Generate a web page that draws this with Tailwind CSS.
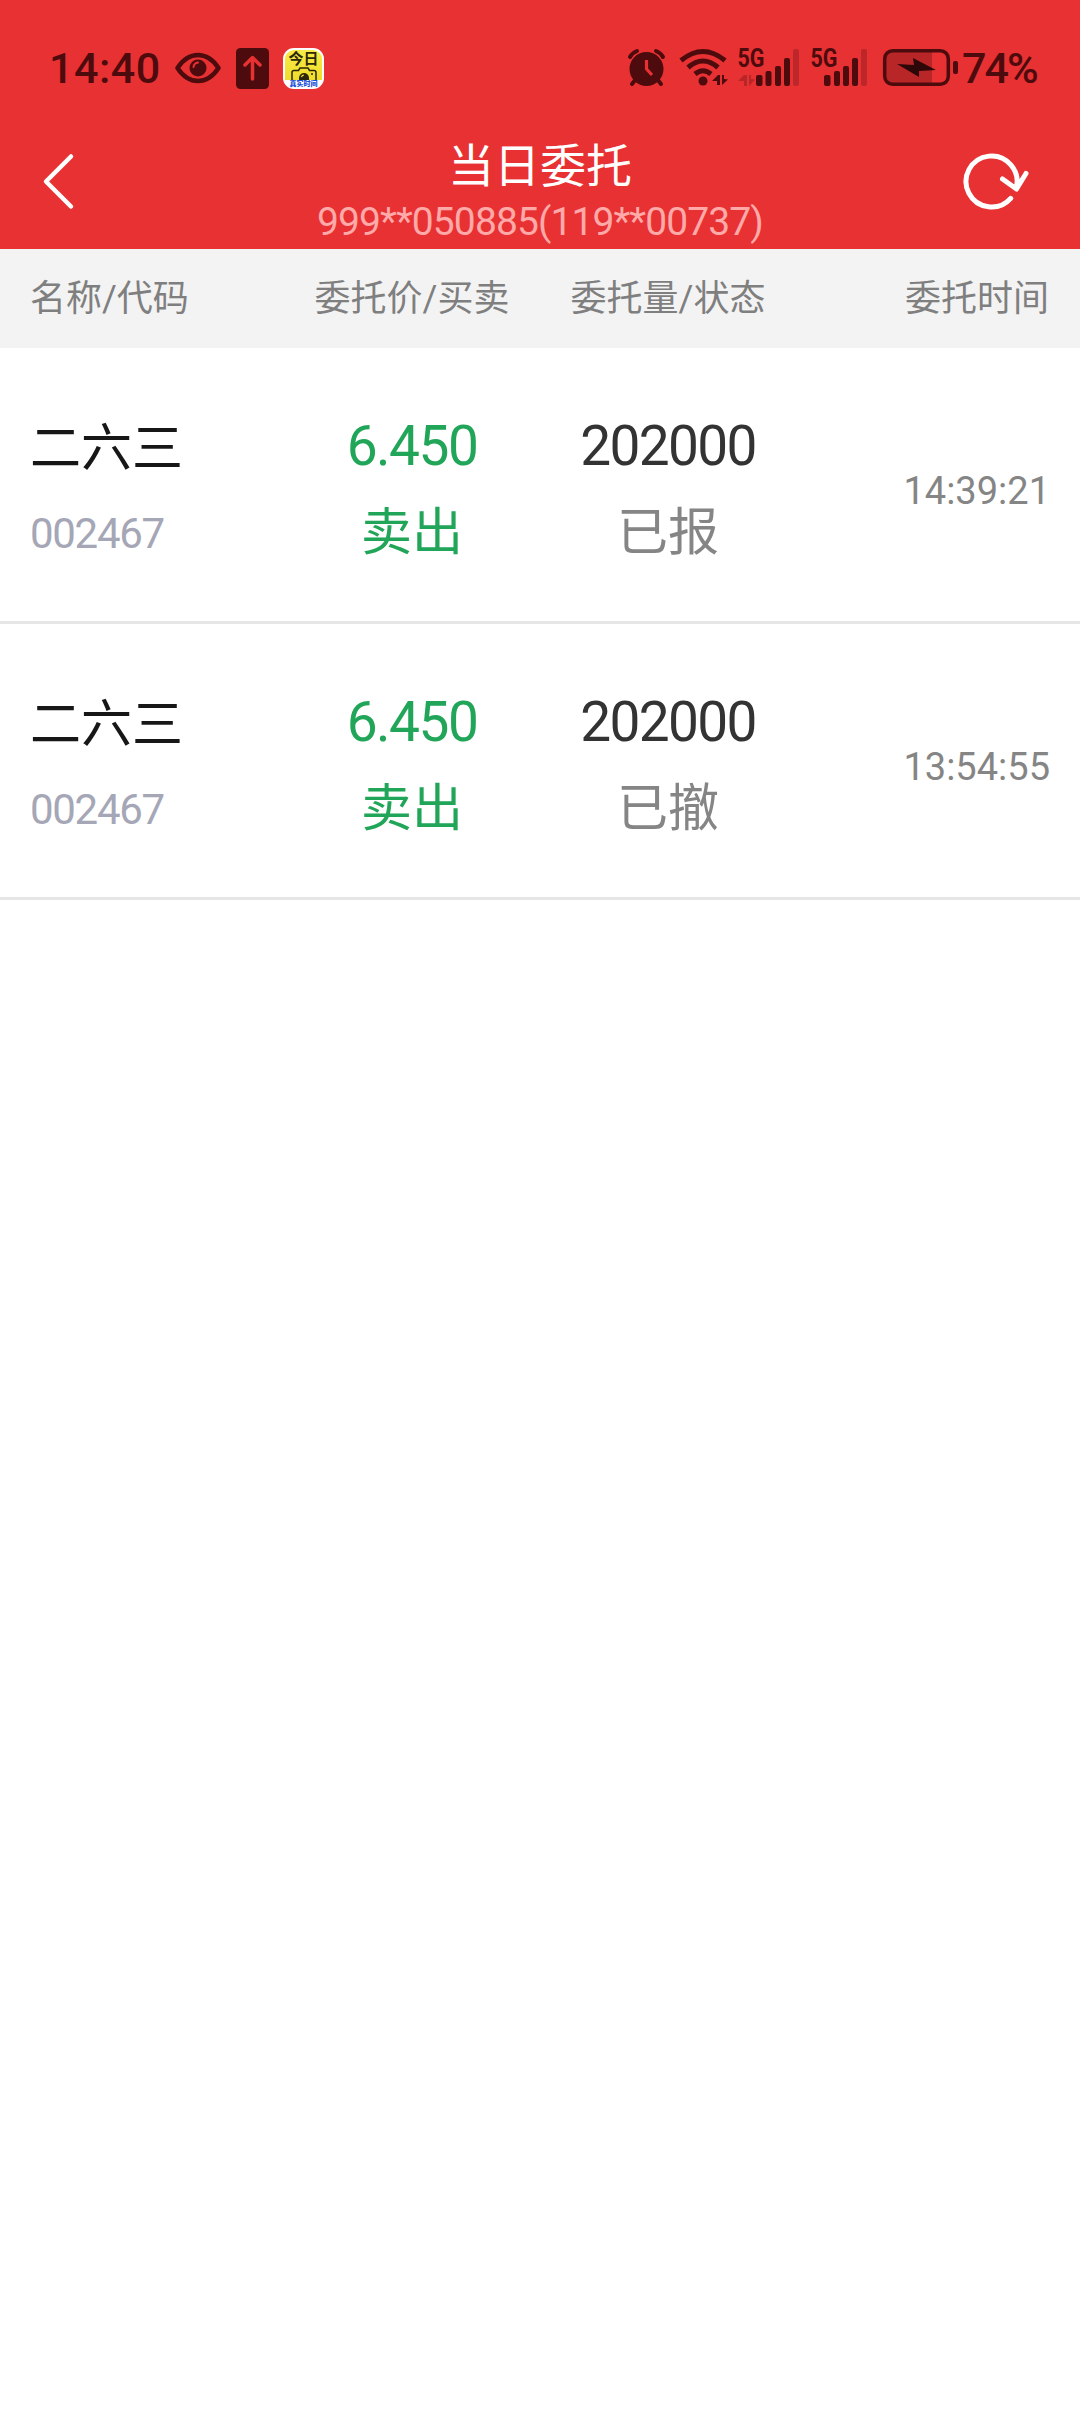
<!DOCTYPE html>
<html lang="zh-CN">
<head>
<meta charset="utf-8">
<title>当日委托</title>
<script src="https://cdn.jsdelivr.net/npm/@tailwindcss/browser@4"></script>
</head>
<body class="w-[1080px] min-h-[2412px] bg-white font-[Roboto,'Noto_Sans_CJK_SC',sans-serif]">
<header class="h-[249px] bg-[#e83132] flex flex-col">
  <!-- status bar -->
  <div class="h-[116px] pt-5 pl-[49px] pr-[43px] flex items-center justify-between text-[#4d0b0d]">
    <div class="flex items-center h-[56px]">
      <span class="w-[126px] text-[43px] leading-[56px] font-medium tracking-[0.5px]">14:40</span>
      <svg class="w-[46px] h-[32px]" viewBox="0 0 46 32" fill="none"><path d="M2.500 16Q11 3 23 3T43.500 16Q35 29 23 29T2.500 16Z" stroke="currentColor" stroke-width="4.500" stroke-linejoin="round"/><circle cx="23" cy="16" r="8.500" fill="currentColor"/><path d="M18.500 15q.5-4 4.500-4.500" stroke="#e83132" stroke-width="2" stroke-linecap="round"/></svg>
      <svg class="w-[33px] h-[41px] ml-[15px]" viewBox="0 0 33 41" fill="none"><rect width="33" height="41" rx="4.500" fill="currentColor"/><path d="M16.500 31V10M9 17l7.500-7.500L24 17" stroke="#e83132" stroke-width="3.500" stroke-linecap="round" stroke-linejoin="round"/></svg>
      <div class="relative w-[41px] h-[41px] ml-[14px] rounded-[11px] bg-white overflow-hidden text-center">
        <div class="mx-[2px] mt-[2px] h-[30px] rounded-t-[9px] bg-linear-to-b from-[#f7ea48] to-[#f0dc28] text-[15px] leading-[18px] font-bold text-[#2b2708]">今日</div>
        <svg class="absolute left-[8px] top-[19px] w-[26px] h-[13px]" viewBox="0 0 26 13" fill="none" stroke="#2b2708" stroke-width="1.500"><path d="M1 13V5.500q0-2 2-2h4.500l1.500-2.500h8l1.500 2.500H23q2 0 2 2V13"/><path d="M8 13v-2a5 5 0 0 1 10 0v2z" fill="#2b2708" stroke="none"/><path d="M20 6.500h2M10.500 10q.5-2 2.500-2" stroke="#f6e230" stroke-width="1.200"/><path d="M20 7h2"/></svg>
        <div class="absolute left-0 right-0 top-[32px] text-[7px] leading-[8px] font-black text-[#1c50d8]">真实时间</div>
      </div>
    </div>
    <div class="flex items-center h-[56px]">
      <svg class="w-[334px] h-[56px]" viewBox="626 40 334 56" fill="none">
        <g stroke="currentColor" stroke-linecap="round">
          <path d="M630 57q2-4 7-6M663 57q-2-4-7-6" stroke-width="4"/>
          <path d="M636 79l-4 5M657 79l4 5" stroke-width="4"/>
        </g>
        <circle cx="646.500" cy="69" r="17" fill="currentColor"/>
        <path d="M646.500 60v9l5.500 6" stroke="#e83132" stroke-width="3.200"/>
        <g stroke="currentColor" stroke-width="5"><path d="M681 60.500q22-18 44 0M688 67.500q15-13 30 0M695 74q8-6.500 16 0"/></g>
        <circle cx="703" cy="81" r="4.500" fill="currentColor"/>
        <path d="M712 81l6-6h2v10h-3v-4zM722 75h2v4l4 .5-6 5.500z" fill="currentColor"/>
        <path d="M738 81l6-6h3v11h-3v-5zM749 75h2v4l4 .5-6 6.500z" fill="#b82628"/>
        <g fill="currentColor">
          <rect x="756" y="75" width="6.500" height="11" rx="2"/><rect x="765.500" y="71" width="6" height="15" rx="2"/><rect x="775" y="66" width="6" height="20" rx="2"/><rect x="784" y="58" width="6" height="28" rx="2"/>
          <rect x="824" y="75" width="6.500" height="11" rx="2"/><rect x="834" y="71" width="6" height="15" rx="2"/><rect x="843" y="66" width="6" height="20" rx="2"/><rect x="852" y="58" width="6" height="28" rx="2"/>
        </g>
        <rect x="793" y="49" width="6" height="37" rx="2" fill="#bd2729"/><rect x="861" y="49" width="6" height="37" rx="2" fill="#bd2729"/>
        <g fill="currentColor" font-family="Roboto" font-weight="700" font-size="25"><text x="737.500" y="67" textLength="27" lengthAdjust="spacingAndGlyphs">5G</text><text x="810.500" y="67" textLength="27" lengthAdjust="spacingAndGlyphs">5G</text></g>
        <path d="M886 52h46v31h-46z" fill="#b82628"/>
        <rect x="884.700" y="50.700" width="63.600" height="33.600" rx="8" stroke="currentColor" stroke-width="3.500"/>
        <rect x="953" y="61" width="5" height="13" rx="2" fill="currentColor"/>
        <path d="M897 64l17 1-1-7 23 12-17 1v6z" fill="#2e0809"/>
      </svg>
      <span class="w-[75px] ml-[2px] text-[43px] leading-[56px] font-medium tracking-[-2px]">74%</span>
    </div>
  </div>
  <!-- title bar -->
  <div class="h-[133px] pl-[40px] pr-[50px] flex justify-between">
    <svg class="w-[40px] h-[60px] mt-[36px]" viewBox="40 152 40 60" fill="none"><path d="M71 156.500L46 181.500l25 25" stroke="#fff" stroke-width="4.500" stroke-linecap="round" stroke-linejoin="round"/></svg>
    <div class="flex flex-col items-center pl-[40px] pt-[21px]">
      <h1 class="text-[46px] leading-[58px] text-white">当日委托</h1>
      <p class="mt-1 text-[39px] leading-[46px] tracking-[-0.900px] text-[#ffa9a9]">999**050885(119**00737)</p>
    </div>
    <svg class="w-[70px] h-[60px] mt-[36px]" viewBox="960 152 70 60" fill="none" stroke="#fff" stroke-width="5" stroke-linecap="round" stroke-linejoin="round"><path d="M1010.700 198.300A25.500 25.500 0 1 1 1016.200 188M1002.500 179l14 10 9.500-15.500"/></svg>
  </div>
</header>
<main>
  <div class="h-[99px] px-7 grid grid-cols-4 items-center bg-[#f3f3f3] text-[36px] leading-[50px] text-[#7f7f7f] text-center">
    <span class="pl-[2px] text-left">名称/代码</span><span>委托价/买卖</span><span>委托量/状态</span><span class="pr-[3px] text-right">委托时间</span>
  </div>
  <section class="h-[276px] border-b-3 border-[#e6e6e6] px-7 grid grid-cols-4 text-center text-[51px] leading-[85px]">
    <div class="pt-[58px] pl-[2px] text-left"><div class="text-[#171717]">二六三</div><div class="text-[42px] tracking-[-1.300px] text-[#a5a6b6]">002467</div></div>
    <div class="pt-[56px] text-[#21a558]"><div class="text-[55px] tracking-[-1.500px]">6.450</div><div class="pt-px">卖出</div></div>
    <div class="pt-[56px] text-[#858585]"><div class="text-[55px] tracking-[-1.700px] text-[#333]">202000</div><div class="pt-px">已报</div></div>
    <div class="pt-[101px] pr-[2px] text-right text-[38px] text-[#858585]">14:39:21</div>
  </section>
  <section class="h-[276px] border-b-3 border-[#e6e6e6] px-7 grid grid-cols-4 text-center text-[51px] leading-[85px]">
    <div class="pt-[58px] pl-[2px] text-left"><div class="text-[#171717]">二六三</div><div class="text-[42px] tracking-[-1.300px] text-[#a5a6b6]">002467</div></div>
    <div class="pt-[56px] text-[#21a558]"><div class="text-[55px] tracking-[-1.500px]">6.450</div><div class="pt-px">卖出</div></div>
    <div class="pt-[56px] text-[#858585]"><div class="text-[55px] tracking-[-1.700px] text-[#333]">202000</div><div class="pt-px">已撤</div></div>
    <div class="pt-[101px] pr-[2px] text-right text-[38px] text-[#858585]">13:54:55</div>
  </section>
</main>
</body>
</html>
